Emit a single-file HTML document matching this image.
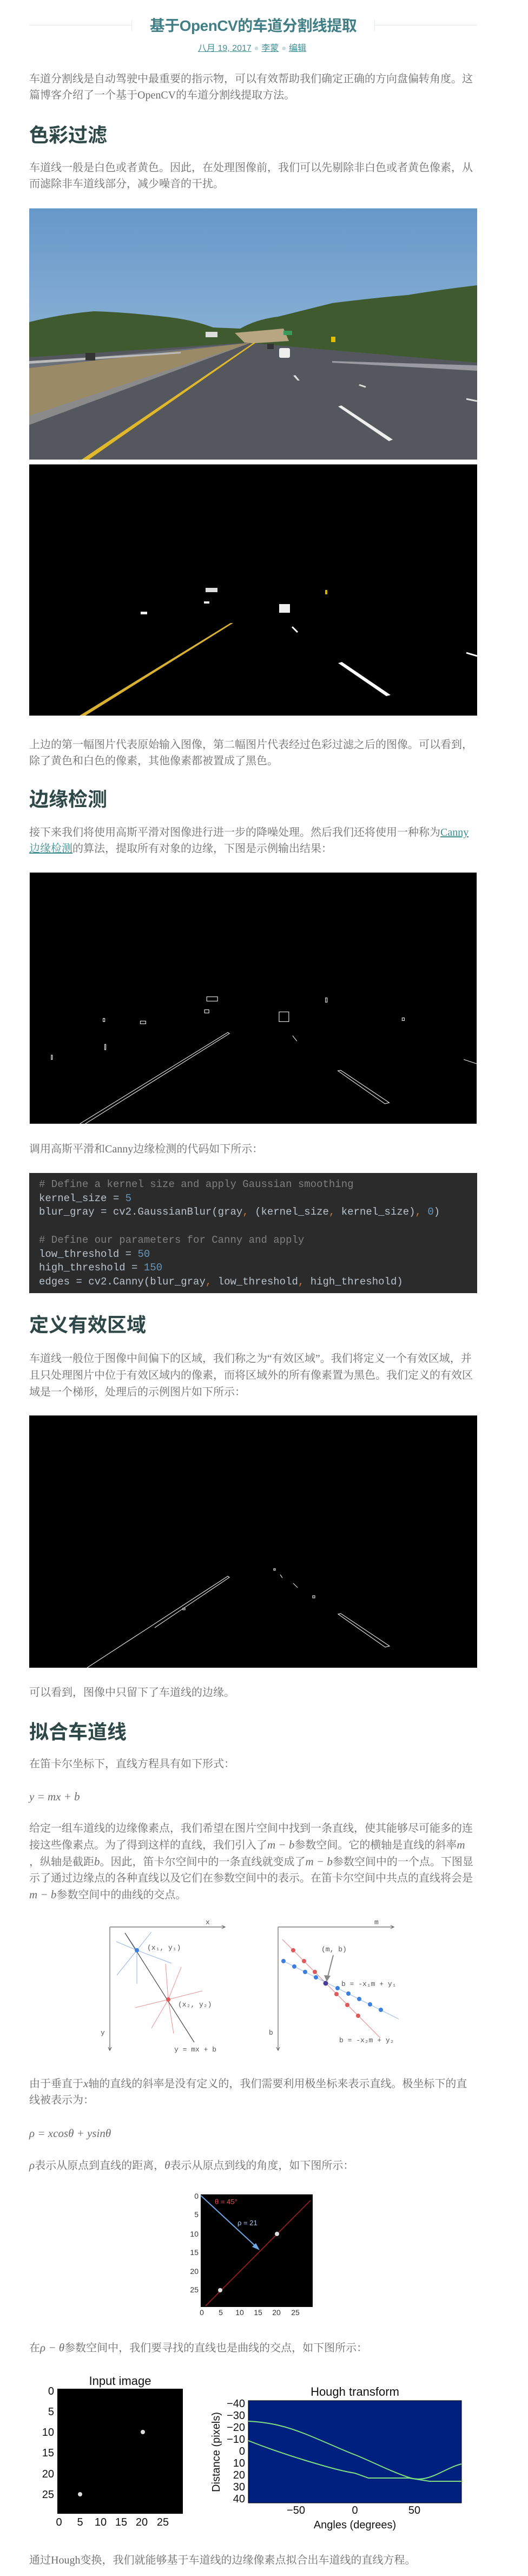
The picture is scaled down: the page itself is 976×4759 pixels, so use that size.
<!DOCTYPE html>
<html><head><meta charset="utf-8">
<style>
html,body{margin:0;padding:0;background:#fff;}
body{width:976px;height:4759px;position:relative;overflow:hidden;}
.p{position:absolute;left:54px;white-space:nowrap;font:20px/30px "Liberation Serif","Noto Serif CJK SC",serif;letter-spacing:0;color:#6b6b6b;}
.p a{color:#3e8e93;text-decoration:underline;}
.m{font-style:italic;letter-spacing:0;font-size:21px;}
.h2{position:absolute;left:54px;white-space:nowrap;font:bold 36px/44px "Liberation Sans","Noto Sans CJK SC",sans-serif;color:#2e4848;}
.img{position:absolute;left:54px;width:828px;height:464px;display:block;}
.code{position:absolute;left:54px;top:2167px;width:810px;height:222px;background:#2b2b2b;padding-left:18px;font:19px/25.7px "Liberation Mono",monospace;color:#b9c3cc;white-space:pre;}
.code .c{color:#808080}.code .n{color:#6897bb}.code .k{color:#cc7832}
</style></head><body>

<div style="position:absolute;left:54px;top:46px;width:189px;height:1px;background:#e3e9e9"></div>
<div style="position:absolute;left:243px;top:37px;width:1px;height:20px;background:#e3e9e9"></div>
<div style="position:absolute;left:693px;top:46px;width:189px;height:1px;background:#e3e9e9"></div>
<div style="position:absolute;left:692px;top:37px;width:1px;height:20px;background:#e3e9e9"></div>
<div style="position:absolute;left:243px;width:450px;top:28px;text-align:center;font:bold 28px/40px 'Liberation Sans','Noto Sans CJK SC',sans-serif;color:#3f7f85;letter-spacing:-0.5px;">基于OpenCV的车道分割线提取</div>
<div style="position:absolute;left:0;width:932px;top:80px;text-align:center;font:16px/20px 'Liberation Sans','Noto Sans CJK SC',sans-serif;color:#3e8e93;">
<span style="text-decoration:underline">八月 19, 2017</span> <span style="color:#c8dede">●</span> <span style="text-decoration:underline">李蒙</span> <span style="color:#c8dede">●</span> <span style="text-decoration:underline">编辑</span></div>

<div class="p" style="top:131px">车道分割线是自动驾驶中最重要的指示物，可以有效帮助我们确定正确的方向盘偏转角度。这<br>篇博客介绍了一个基于OpenCV的车道分割线提取方法。</div>
<div class="h2" style="top:228px">色彩过滤</div>
<div class="p" style="top:295px">车道线一般是白色或者黄色。因此，在处理图像前，我们可以先剔除非白色或者黄色像素，从<br>而滤除非车道线部分，减少噪音的干扰。</div>

<svg class="img" style="top:385px" viewBox="0 0 828 464">
<defs><linearGradient id="sky" x1="0" y1="0" x2="0" y2="1"><stop offset="0" stop-color="#6798c9"/><stop offset="1" stop-color="#a8c6e0"/></linearGradient></defs>
<rect width="828" height="464" fill="url(#sky)"/>
<path d="M0 210 Q60 195 120 190 Q180 192 250 200 Q300 205 340 220 L390 222 Q420 205 460 200 Q520 185 560 175 Q640 165 700 160 Q760 150 828 142 L828 290 L0 290Z" fill="#3e5a2e"/>
<path d="M380 230 L470 222 L480 245 L400 250Z" fill="#b8a582"/>
<path d="M0 275 L400 248 L828 285 L828 464 L0 464Z" fill="#55575f"/>
<path d="M0 286 L410 248 L0 300Z" fill="#6c7078"/>
<path d="M0 295 L410 248 L0 390Z" fill="#9a8a66"/>
<path d="M0 383 L410 248 L0 400Z" fill="#8a8a8a"/>
<path d="M0 282 L280 265 L280 268 L0 287Z" fill="#bbb"/>
<path d="M560 282 L828 290 L828 300 L560 285Z" fill="#9a9aa0"/>
<path d="M97 464 L415 248 L419 248 L110 464Z" fill="#e0b82a"/>
<path d="M571 366 L577 364 L672 427 L665 430Z" fill="#eeeeee"/>
<path d="M488 309 L492 308 L500 318 L496 318Z" fill="#ddd"/>
<path d="M610 326 L622 330" stroke="#ddd" stroke-width="3"/>
<path d="M808 352 L828 356" stroke="#ddd" stroke-width="3"/>
<rect x="462" y="258" width="20" height="18" rx="3" fill="#eee"/>
<rect x="440" y="250" width="12" height="10" fill="#333"/>
<rect x="104" y="267" width="18" height="14" fill="#333"/>
<rect x="558" y="237" width="8" height="10" fill="#e0c000"/>
<rect x="326" y="228" width="22" height="10" fill="#ddd"/>
<rect x="470" y="226" width="16" height="8" fill="#3a9a5a"/>
</svg>

<svg class="img" style="top:858px" viewBox="0 0 828 464">
<rect width="828" height="464" fill="#000"/>
<path d="M93 464 L372 293 L377 293 L104 464Z" fill="#d9b030"/>
<path d="M571 367 L578 365 L668 426 L660 428Z" fill="#fff"/>
<rect x="462" y="258" width="20" height="16" fill="#eee"/>
<rect x="326" y="228" width="22" height="8" fill="#ddd"/>
<rect x="206" y="272" width="12" height="5" fill="#eee"/>
<rect x="323" y="253" width="10" height="4" fill="#eee"/>
<rect x="547" y="232" width="4" height="8" fill="#d4b000"/>
<path d="M486 300 L496 310" stroke="#fff" stroke-width="3"/>
<path d="M808 348 L828 354" stroke="#fff" stroke-width="3"/>
</svg>

<div class="p" style="top:1361px">上边的第一幅图片代表原始输入图像，第二幅图片代表经过色彩过滤之后的图像。可以看到，<br>除了黄色和白色的像素，其他像素都被置成了黑色。</div>
<div class="h2" style="top:1455px">边缘检测</div>
<div class="p" style="top:1523px">接下来我们将使用高斯平滑对图像进行进一步的降噪处理。然后我们还将使用一种称为<a>Canny</a><br><a>边缘检测</a>的算法，提取所有对象的边缘，下图是示例输出结果：</div>

<svg class="img" style="top:1612px" viewBox="0 0 828 465" fill="none" stroke="#ddd" stroke-width="1.2">
<rect width="828" height="465" fill="#000" stroke="none"/>
<path d="M93 465 L367 296 L370 298 L103 465"/>
<path d="M571 367 L576 366 L666 426 L658 428Z"/>
<rect x="328" y="230" width="20" height="8"/><rect x="462" y="258" width="18" height="18"/>
<rect x="205" y="275" width="10" height="5"/><rect x="324" y="254" width="8" height="6"/>
<rect x="548" y="232" width="3" height="8"/><path d="M487 302 L495 312"/>
<path d="M804 346 L828 354"/><rect x="136" y="270" width="3" height="6"/><rect x="690" y="269" width="4" height="5"/>
<rect x="139" y="318" width="2" height="10"/><rect x="40" y="338" width="2" height="8"/>
</svg>

<div class="p" style="top:2108px">调用高斯平滑和Canny边缘检测的代码如下所示：</div>
<div class="code"><div style="height:9px"></div><span class="c"># Define a kernel size and apply Gaussian smoothing</span>
kernel_size = <span class="n">5</span>
blur_gray = cv2.GaussianBlur(gray<span class="k">,</span> (kernel_size<span class="k">,</span> kernel_size)<span class="k">,</span> <span class="n">0</span>)

<span class="c"># Define our parameters for Canny and apply</span>
low_threshold = <span class="n">50</span>
high_threshold = <span class="n">150</span>
edges = cv2.Canny(blur_gray<span class="k">,</span> low_threshold<span class="k">,</span> high_threshold)</div>

<div class="h2" style="top:2426px">定义有效区域</div>
<div class="p" style="top:2495px;line-height:31px">车道线一般位于图像中间偏下的区域，我们称之为“有效区域”。我们将定义一个有效区域，并<br>且只处理图片中位于有效区域内的像素，而将区域外的所有像素置为黑色。我们定义的有效区<br>域是一个梯形，处理后的示例图片如下所示：</div>

<svg class="img" style="top:2615px;height:466px" viewBox="0 0 828 466" fill="none" stroke="#ddd" stroke-width="1.2">
<rect width="828" height="466" fill="#000" stroke="none"/>
<path d="M107 466 L367 297 L370 299 L232 392"/>
<path d="M571 367 L576 366 L666 426 L658 428Z"/>
<rect x="452" y="283" width="3" height="3"/><path d="M464 294 L468 300"/><path d="M488 310 L496 318"/><rect x="524" y="333" width="4" height="4"/><rect x="284" y="356" width="4" height="3"/>
</svg>

<div class="p" style="top:3112px">可以看到，图像中只留下了车道线的边缘。</div>
<div class="h2" style="top:3178px">拟合车道线</div>
<div class="p" style="top:3244px">在笛卡尔坐标下，直线方程具有如下形式：</div>
<div class="p" style="top:3304px"><span class="m">y = mx + b</span></div>
<div class="p" style="top:3363px">给定一组车道线的边缘像素点，我们希望在图片空间中找到一条直线，使其能够尽可能多的连<br>接这些像素点。为了得到这样的直线，我们引入了<span class="m">m − b</span>参数空间。它的横轴是直线的斜率<span class="m">m</span><br>，纵轴是截距<span class="m">b</span>。因此，笛卡尔空间中的一条直线就变成了<span class="m">m − b</span>参数空间中的一个点。下图显<br>示了通过边缘点的各种直线以及它们在参数空间中的表示。在笛卡尔空间中共点的直线将会是<br><span class="m">m − b</span>参数空间中的曲线的交点。</div>

<svg style="position:absolute;left:180px;top:3547px" width="580" height="250" viewBox="0 0 580 250" font-family="Liberation Mono,monospace" font-size="13" fill="#555">
<g stroke="#666" stroke-width="1.2" fill="none">
<path d="M23 13 L236 13 M230 10 L236 13 L230 16 M23 13 L23 241 M20 235 L23 241 L26 235"/>
<path d="M334 13 L548 13 M542 10 L548 13 L542 16 M334 13 L334 241 M331 235 L334 241 L337 235"/>
</g>
<text x="200" y="8">x</text><text x="6" y="212">y</text><text x="512" y="8">m</text><text x="317" y="212">b</text>
<g stroke="#8fb4e8" stroke-width="1">
<path d="M73 56 L73 118 M73 56 L100 22 M73 56 L36 102 M73 56 L35 40 M73 56 L137 80 M73 56 L51 24"/>
</g>
<g stroke="#e89090" stroke-width="1">
<path d="M131 147 L194 131 M131 147 L70 162 M131 147 L155 87 M131 147 L100 200 M131 147 L126 81 M131 147 L141 210"/>
</g>
<path d="M51 24 L179 226" stroke="#444" stroke-width="1.2"/>
<circle cx="73" cy="56" r="4" fill="#3b7fe0"/><circle cx="131" cy="147" r="4" fill="#e05a5a"/>
<text x="92" y="55">(x₁, y₁)</text><text x="149" y="160">(x₂, y₂)</text><text x="142" y="243">y = mx + b</text>
<path d="M342 36 L523 218" stroke="#e89090" stroke-width="1.2"/>
<path d="M342 75 L557 183" stroke="#9cc0ee" stroke-width="1.2"/>
<g fill="#e05a5a"><circle cx="362" cy="56" r="4"/><circle cx="382" cy="76" r="4"/><circle cx="402" cy="96" r="4"/><circle cx="442" cy="137" r="4"/><circle cx="462" cy="157" r="4"/><circle cx="482" cy="177" r="4"/></g>
<g fill="#3b7fe0"><circle cx="344" cy="76" r="4"/><circle cx="364" cy="86" r="4"/><circle cx="384" cy="96" r="4"/><circle cx="404" cy="106" r="4"/><circle cx="444" cy="126" r="4"/><circle cx="464" cy="136" r="4"/><circle cx="484" cy="146" r="4"/><circle cx="504" cy="156" r="4"/><circle cx="524" cy="166" r="4"/></g>
<circle cx="422" cy="117" r="4.5" fill="#4a3a9a"/>
<path d="M436 65 L425 108" stroke="#888" stroke-width="2"/><path d="M419 102 L424 114 L431 103Z" fill="#888"/>
<text x="414" y="58">(m, b)</text><text x="451" y="122">b = -x₁m + y₁</text><text x="447" y="226">b = -x₂m + y₂</text>
</svg>

<div class="p" style="top:3834px">由于垂直于<span class="m">x</span>轴的直线的斜率是没有定义的，我们需要利用极坐标来表示直线。极坐标下的直<br>线被表示为：</div>
<div class="p" style="top:3926px"><span class="m">ρ = xcosθ + ysinθ</span></div>
<div class="p" style="top:3985px"><span class="m">ρ</span>表示从原点到直线的距离，<span class="m">θ</span>表示从原点到线的角度，如下图所示：</div>

<svg style="position:absolute;left:340px;top:4045px" width="250" height="240" viewBox="0 0 250 240" font-family="Liberation Sans,sans-serif" font-size="14" fill="#333">
<rect x="31" y="9" width="207" height="208" fill="#000"/>
<g text-anchor="end"><text x="27" y="17">0</text><text x="27" y="51">5</text><text x="27" y="87">10</text><text x="27" y="121">15</text><text x="27" y="156">20</text><text x="27" y="190">25</text></g>
<g text-anchor="middle"><text x="33" y="232">0</text><text x="68" y="232">5</text><text x="103" y="232">10</text><text x="137" y="232">15</text><text x="171" y="232">20</text><text x="206" y="232">25</text></g>
<path d="M40 215 L234 20" stroke="#b02020" stroke-width="1.5"/>
<path d="M31 11 L136 108" stroke="#6fa8e8" stroke-width="2"/><path d="M140 112 L126 106 L133 99Z" fill="#6fa8e8"/>
<circle cx="172" cy="82" r="4" fill="#ddd"/><circle cx="67" cy="186" r="4" fill="#ddd"/>
<text x="57" y="27" fill="#e05050" font-size="13">θ = 45°</text><text x="99" y="66" fill="#a8c8f0" font-size="13">ρ = 21</text>
</svg>

<div class="p" style="top:4322px">在<span class="m">ρ − θ</span>参数空间中，我们要寻找的直线也是曲线的交点，如下图所示：</div>

<svg style="position:absolute;left:60px;top:4385px" width="820" height="300" viewBox="0 0 820 300" font-family="Liberation Sans,sans-serif" font-size="20" fill="#111">
<text x="162" y="21" text-anchor="middle" font-size="22">Input image</text>
<rect x="46" y="28" width="232" height="231" fill="#000"/>
<g text-anchor="end"><text x="40" y="39">0</text><text x="40" y="77">5</text><text x="40" y="115">10</text><text x="40" y="153">15</text><text x="40" y="192">20</text><text x="40" y="230">25</text></g>
<g text-anchor="middle"><text x="49" y="281">0</text><text x="88" y="281">5</text><text x="126" y="281">10</text><text x="164" y="281">15</text><text x="202" y="281">20</text><text x="241" y="281">25</text></g>
<circle cx="204" cy="108" r="4" fill="#ddd"/><circle cx="88" cy="223" r="4" fill="#ddd"/>
<text x="596" y="41" text-anchor="middle" font-size="22">Hough transform</text>
<rect x="399" y="50" width="394" height="189" fill="#00207f" stroke="#000"/>
<g text-anchor="end"><text x="393" y="62">−40</text><text x="393" y="84">−30</text><text x="393" y="106">−20</text><text x="393" y="128">−10</text><text x="393" y="150">0</text><text x="393" y="172">10</text><text x="393" y="194">20</text><text x="393" y="216">30</text><text x="393" y="238">40</text></g>
<g text-anchor="middle"><text x="487" y="259">−50</text><text x="596" y="259">0</text><text x="706" y="259">50</text></g>
<text x="596" y="286" text-anchor="middle">Angles (degrees)</text>
<text transform="translate(346 145) rotate(-90)" text-anchor="middle">Distance (pixels)</text>
<path d="M399 88 C440 90 470 98 503 111 S570 140 596 150 S660 180 696 192 S760 175 793 167" fill="none" stroke="#7ee07e" stroke-width="2"/>
<path d="M399 124 C440 140 470 150 503 160 S570 180 596 184 L621 193 L696 193 L734 199 L793 199" fill="none" stroke="#7ee07e" stroke-width="2"/>
</svg>

<div class="p" style="top:4715px">通过Hough变换，我们就能够基于车道线的边缘像素点拟合出车道线的直线方程。</div>
</body></html>
